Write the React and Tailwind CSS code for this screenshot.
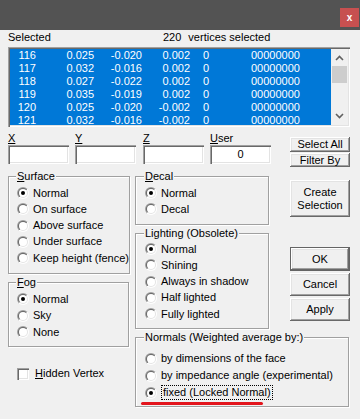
import React from "react";

const SUNKEN =
  "shadow-[inset_1px_1px_0_#a0a0a0,inset_2px_2px_0_#696969,inset_-1px_-1px_0_#fff,inset_-2px_-2px_0_#e3e3e3]";
const RAISED =
  "bg-[#f0f0f0] shadow-[inset_-1px_-1px_0_#696969,inset_1px_1px_0_#fff,inset_-2px_-2px_0_#a0a0a0,inset_2px_2px_0_#e3e3e3]";

const rows = [
  ["116", "0.025", "-0.020", "0.002"],
  ["117", "0.032", "-0.016", "0.002"],
  ["118", "0.027", "-0.022", "0.002"],
  ["119", "0.035", "-0.019", "0.002"],
  ["120", "0.025", "-0.020", "-0.002"],
  ["121", "0.032", "-0.016", "-0.002"],
];

function Radio({ checked }) {
  return (
    <svg width="12" height="12" viewBox="0 0 12 12" className="shrink-0">
      <defs>
        <linearGradient id="ro" x1="0" y1="0" x2="1" y2="1">
          <stop offset="0" stopColor="#a0a0a0" />
          <stop offset="0.5" stopColor="#a0a0a0" />
          <stop offset="0.5" stopColor="#ffffff" />
          <stop offset="1" stopColor="#ffffff" />
        </linearGradient>
        <linearGradient id="ri" x1="0" y1="0" x2="1" y2="1">
          <stop offset="0" stopColor="#696969" />
          <stop offset="0.5" stopColor="#696969" />
          <stop offset="0.5" stopColor="#e3e3e3" />
          <stop offset="1" stopColor="#e3e3e3" />
        </linearGradient>
      </defs>
      <circle cx="6" cy="6" r="6" fill="url(#ro)" />
      <circle cx="6" cy="6" r="5" fill="url(#ri)" />
      <circle cx="6" cy="6" r="4" fill="#fff" />
      {checked && <circle cx="6" cy="6" r="2" fill="#000" />}
    </svg>
  );
}

function Option({ label, checked, h = "h-[16.25px]", children }) {
  return (
    <div className={`flex items-center gap-[4px] whitespace-nowrap ${h}`}>
      <Radio checked={checked} />
      {children || <span>{label}</span>}
    </div>
  );
}

function Group({ legend, className, children }) {
  return (
    <fieldset
      className={`border border-[#a0a0a0] shadow-[inset_1px_1px_0_#fff,1px_1px_0_#fff] ${className}`}
    >
      <legend className="-ml-[1px] px-[1px] bg-[#f0f0f0] leading-[13px]">{legend}</legend>
      {children}
    </fieldset>
  );
}

function Field({ label, value, className }) {
  return (
    <div className={`flex flex-col w-[61px] ${className}`}>
      <div className="h-[13px] pt-[2px]">{label}</div>
      <div className={`mt-[2px] h-[19px] bg-white flex items-center justify-center ${SUNKEN}`}>
        {value}
      </div>
    </div>
  );
}

function Btn({ children, className }) {
  return (
    <div className={`w-[60px] flex flex-col items-center justify-center text-center ${RAISED} ${className}`}>
      {children}
    </div>
  );
}

export default function App() {
  return (
    <div className="w-[360px] h-[419px] overflow-hidden bg-[#f0f0f0] text-black text-[11px] leading-[13px] font-['Liberation_Sans',Arial,sans-serif]">
      {/* title bar */}
      <div className="h-[30px] bg-[#535353] flex justify-end">
        <div className="mt-[8px] mr-[1px] w-[19px] h-[19px] bg-[#c75050] text-white font-bold text-[10px] flex items-center justify-center">
          x
        </div>
      </div>

      <div className="px-[8px]">
        {/* header */}
        <div className="mt-[1px] flex h-[13px]">
          <span className="w-[155px]">Selected</span>
          <span>220</span>
          <span className="ml-[7px]">vertices selected</span>
        </div>

        {/* list */}
        <div className={`mt-[3px] w-[342px] h-[80px] p-[2px] ${SUNKEN}`}>
          <div className="flex h-[76px]">
            <div className="w-[321px] h-[76px] overflow-hidden bg-[#0078d7] text-white">
              {rows.map((r) => (
                <div key={r[0]} className="flex h-[13px]">
                  <span className="w-[26px] text-right">{r[0]}</span>
                  <span className="w-[58px] text-right">{r[1]}</span>
                  <span className="w-[48px] text-right">{r[2]}</span>
                  <span className="w-[48px] text-right">{r[3]}</span>
                  <span className="w-[61px] pl-[13px]">0</span>
                  <span>00000000</span>
                </div>
              ))}
            </div>
            <div className="w-[17px] h-[76px] flex flex-col items-center">
              <svg width="9" height="6" viewBox="0 0 9 6" className="mt-[6px]">
                <path d="M1 5 L4.5 1.5 L8 5" stroke="#606060" strokeWidth="1.6" fill="none" />
              </svg>
              <div className="mt-[5px] w-[15px] h-[17px] bg-[#cdcdcd]" />
              <svg width="9" height="6" viewBox="0 0 9 6" className="mt-[30px]">
                <path d="M1 1 L4.5 4.5 L8 1" stroke="#606060" strokeWidth="1.6" fill="none" />
              </svg>
            </div>
          </div>
        </div>

        {/* coordinate fields */}
        <div className="mt-[3px] w-[342px] h-[40px] flex">
          <Field label={<><u>X</u></>} />
          <Field label={<><u>Y</u></>} className="ml-[6px]" />
          <Field label={<><u>Z</u></>} className="ml-[7px]" />
          <Field label={<><u>U</u>ser</>} value="0" className="ml-[6px]" />
          <div className="ml-auto mt-[7px] flex flex-col gap-[1px]">
            <Btn className="h-[15px]">Select All</Btn>
            <Btn className="h-[14px]">Filter By</Btn>
          </div>
        </div>

        {/* main */}
        <div className="flex gap-[6px]">
          <div className="w-[121px] flex flex-col">
            <Group legend={<><u>S</u>urface</>} className="h-[104px] pl-[8px] pt-[2px]">
              <Option label="Normal" checked />
              <Option label="On surface" />
              <Option label="Above surface" />
              <Option label="Under surface" />
              <Option label="Keep height (fence)" />
            </Group>
            <Group legend={<><u>F</u>og</>} className="mt-[2px] h-[71px] pl-[8px] pt-[2px]">
              <Option label="Normal" checked h="h-[16.5px]" />
              <Option label="Sky" h="h-[16.5px]" />
              <Option label="None" h="h-[16.5px]" />
            </Group>
            <div className="mt-[20px] ml-[9px] flex items-center gap-[6px] h-[13px]">
              <div className={`w-[12px] h-[12px] bg-white ${SUNKEN}`} />
              <span>
                <u>H</u>idden Vertex
              </span>
            </div>
          </div>

          <div className="w-[215px] flex flex-col">
            <div className="flex">
              <div className="w-[134px] flex flex-col">
                <Group legend={<><u>D</u>ecal</>} className="h-[55px] pl-[9px] pt-[2px]">
                  <Option label="Normal" checked />
                  <Option label="Decal" />
                </Group>
                <Group legend="Lighting (Obsolete)" className="mt-[2px] h-[102px] pl-[9px] pt-[1px]">
                  <Option label="Normal" checked />
                  <Option label="Shining" />
                  <Option label="Always in shadow" />
                  <Option label="Half lighted" />
                  <Option label="Fully lighted" />
                </Group>
              </div>
              <div className="ml-auto flex flex-col">
                <Btn className="mt-[10px] h-[37px]">
                  <span>Create</span>
                  <span>Selection</span>
                </Btn>
                <Btn className="mt-[30px] h-[24px] border border-[#646464]">OK</Btn>
                <Btn className="mt-[2px] h-[23px]">Cancel</Btn>
                <Btn className="mt-[2px] h-[23px]">Apply</Btn>
              </div>
            </div>
            <Group
              legend="Normals (Weighted average by:)"
              className="mt-[2px] w-[214px] h-[76px] pl-[9px] pt-[6px]"
            >
              <Option label="by dimensions of the face" h="h-[17px]" />
              <Option label="by impedance angle (experimental)" h="h-[17px]" />
              <Option checked h="h-[17px]">
                <span className="border border-dotted border-black px-[1px] leading-[13px]">
                  fixed (Locked Normal)
                </span>
              </Option>
              <div className="mt-[1px] -ml-[4px] w-[122px] h-[3px] rounded-full bg-[#e3141c]" />
            </Group>
          </div>
        </div>
      </div>
    </div>
  );
}
